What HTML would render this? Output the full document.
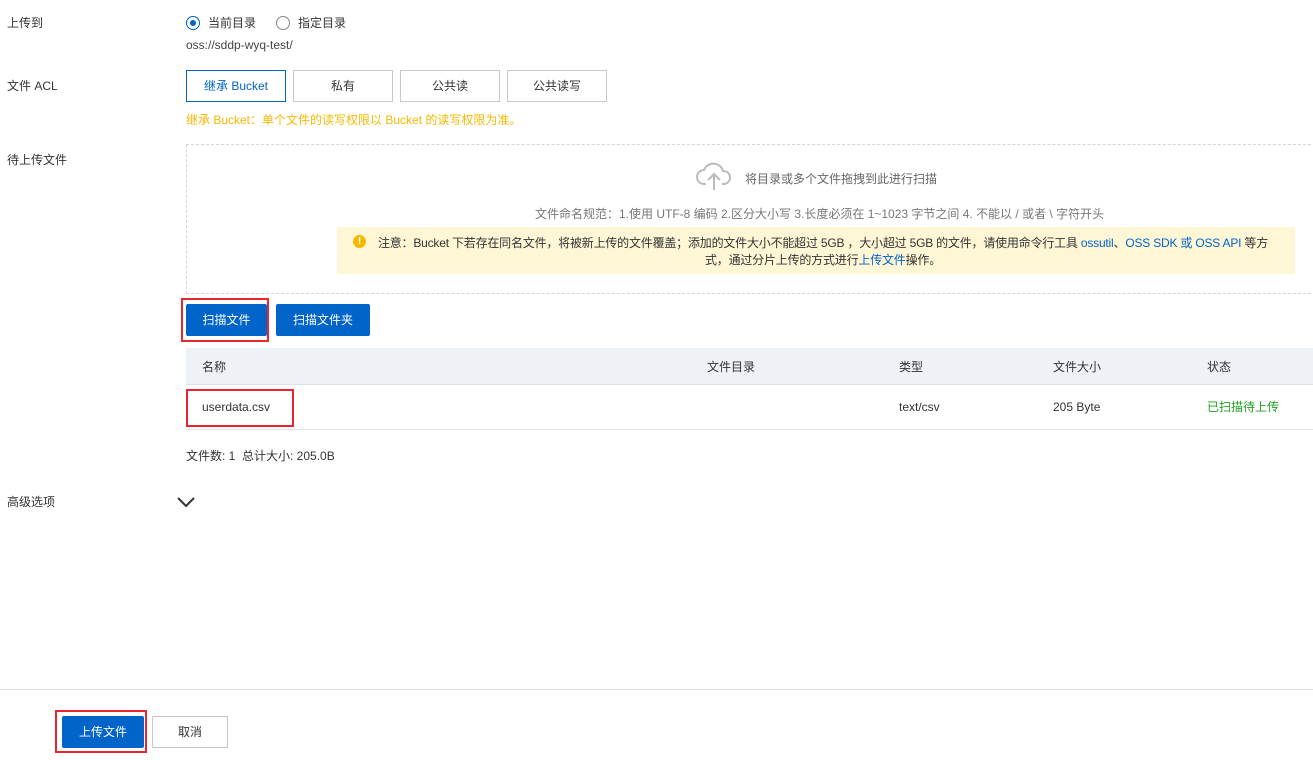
<!DOCTYPE html>
<html><head><meta charset="utf-8"><style>
*{margin:0;padding:0;box-sizing:border-box}
body{width:1313px;height:760px;background:#fff;position:relative;overflow:hidden;font-family:"Liberation Sans","Noto Sans CJK SC",sans-serif;font-size:12px;color:#333}
.a{position:absolute;white-space:nowrap;line-height:16px}
.btn{position:absolute;border:1px solid #c8c8c8;background:#fff;text-align:center;line-height:31px;font-size:12px;color:#333}
.pb{position:absolute;background:#0064c8;color:#fff;text-align:center;font-size:12px;border-radius:2px}
.red{position:absolute;border:2px solid #e8262b}
.radio{position:absolute;width:14px;height:14px;border-radius:50%;border:1px solid #888}
</style></head><body>
<div class="a" style="left:7px;top:15px">上传到</div>
<div class="radio" style="left:186px;top:16px;border-color:#0064c8"><div style="position:absolute;left:3px;top:3px;width:6px;height:6px;border-radius:50%;background:#0064c8"></div></div>
<div class="a" style="left:208px;top:15px">当前目录</div>
<div class="radio" style="left:276px;top:16px"></div>
<div class="a" style="left:298px;top:15px">指定目录</div>
<div class="a" style="left:186px;top:37px;color:#444">oss://sddp-wyq-test/</div>

<div class="a" style="left:7px;top:78px">文件 ACL</div>
<div class="btn" style="left:186px;top:70px;width:100px;height:32px;border-color:#0064c8;color:#0064c8">继承 Bucket</div>
<div class="btn" style="left:293px;top:70px;width:100px;height:32px">私有</div>
<div class="btn" style="left:400px;top:70px;width:100px;height:32px">公共读</div>
<div class="btn" style="left:507px;top:70px;width:100px;height:32px">公共读写</div>
<div class="a" style="left:186px;top:112px;color:#f5b800">继承 Bucket：单个文件的读写权限以 Bucket 的读写权限为准。</div>

<div class="a" style="left:7px;top:152px">待上传文件</div>
<div style="position:absolute;left:186px;top:144px;width:1140px;height:150px;border:1px dashed #d5d5d5"></div>
<svg style="position:absolute;left:696px;top:160px" width="36" height="32" viewBox="0 0 36 32"><path d="M10 24H8a7 7 0 0 1 0-14 10 10 0 0 1 19 1 6.5 6.5 0 0 1 1 13h-2" fill="none" stroke="#bbb" stroke-width="2"/><path d="M18 30V15M12 20l6-6 6 6" fill="none" stroke="#bbb" stroke-width="2"/></svg>
<div class="a" style="left:745px;top:171px;color:#666">将目录或多个文件拖拽到此进行扫描</div>
<div class="a" style="left:535px;top:206px;color:#777">文件命名规范：1.使用 UTF-8 编码 2.区分大小写 3.长度必须在 1~1023 字节之间 4. 不能以 / 或者 \ 字符开头</div>
<div style="position:absolute;left:337px;top:227px;width:958px;height:47px;background:#fff6d6"></div>
<div style="position:absolute;left:353px;top:235px;width:13px;height:13px;border-radius:50%;background:#f5b800;color:#fff;font-size:10px;line-height:13px;text-align:center;font-weight:bold">!</div>
<div style="position:absolute;left:374px;top:235px;width:898px;text-align:center;line-height:17px;color:#333;font-size:12px;letter-spacing:-0.2px">注意：Bucket 下若存在同名文件，将被新上传的文件覆盖；添加的文件大小不能超过 5GB ，大小超过 5GB 的文件，请使用命令行工具 <span style="color:#0064c8">ossutil</span>、<span style="color:#0064c8">OSS SDK 或 OSS API</span> 等方式，通过分片上传的方式进行<span style="color:#0064c8">上传文件</span>操作。</div>

<div class="pb" style="left:186px;top:304px;width:81px;height:32px;line-height:32px">扫描文件</div>
<div class="red" style="left:181px;top:298px;width:88px;height:44px"></div>
<div class="pb" style="left:276px;top:304px;width:94px;height:32px;line-height:32px">扫描文件夹</div>

<div style="position:absolute;left:186px;top:348px;width:1127px;height:37px;background:#eef1f6;border-bottom:1px solid #dde1e6"></div>
<div class="a" style="left:202px;top:359px">名称</div>
<div class="a" style="left:707px;top:359px">文件目录</div>
<div class="a" style="left:899px;top:359px">类型</div>
<div class="a" style="left:1053px;top:359px">文件大小</div>
<div class="a" style="left:1207px;top:359px">状态</div>
<div style="position:absolute;left:186px;top:429px;width:1127px;height:1px;background:#e3e3e3"></div>
<div class="a" style="left:202px;top:399px">userdata.csv</div>
<div class="red" style="left:186px;top:389px;width:108px;height:38px"></div>
<div class="a" style="left:899px;top:399px">text/csv</div>
<div class="a" style="left:1053px;top:399px">205 Byte</div>
<div class="a" style="left:1207px;top:399px;color:#1fa01f">已扫描待上传</div>
<div class="a" style="left:186px;top:448px">文件数: 1 &nbsp;总计大小: 205.0B</div>

<div class="a" style="left:7px;top:494px">高级选项</div>
<svg style="position:absolute;left:176px;top:495px" width="20" height="14" viewBox="0 0 20 14"><path d="M2 3l8 8 8-8" fill="none" stroke="#333" stroke-width="2"/></svg>

<div style="position:absolute;left:0;top:689px;width:1313px;height:1px;background:#ddd"></div>
<div class="pb" style="left:62px;top:716px;width:82px;height:32px;line-height:32px">上传文件</div>
<div class="red" style="left:55px;top:710px;width:92px;height:43px"></div>
<div class="btn" style="left:152px;top:716px;width:76px;height:32px;line-height:30px">取消</div>
</body></html>
